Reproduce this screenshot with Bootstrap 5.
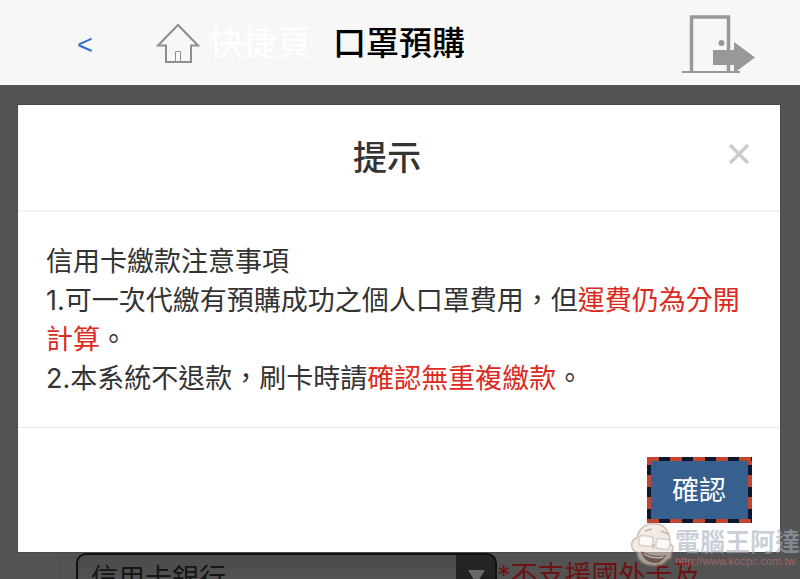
<!DOCTYPE html>
<html lang="zh-Hant">
<head>
<meta charset="utf-8">
<meta name="viewport" content="width=device-width, initial-scale=1">
<title>口罩預購</title>
<link href="https://cdn.jsdelivr.net/npm/bootstrap@5.3.0/dist/css/bootstrap.min.css" rel="stylesheet">
<style>
body { font-family: Inter, "Noto Sans CJK TC", sans-serif; font-size: 27px; line-height: 39px; color: #333; background: #535456; }
.topbar { height: 85px; background: #f7f7f7; }
.back-link { width: 156px; padding: 6px 0 0 77px; color: #2f6fd8; font-family: "Liberation Sans", sans-serif; }
.home-link { color: #fff; font-size: 34px; gap: 9px; }
.page-title { font-size: 33px; line-height: 48px; font-weight: 500; color: #000; margin-left: 22px; }
.exit-link { margin-right: 45px; }
.notice { margin: 19px 19px 0 17px; border: 1px solid #48494a; border-radius: 0; color: #333; }
.notice-head { height: 107px; border-bottom: 2px solid #f1f1f1; padding: 0 29px; }
.notice-title { font-size: 34px; line-height: 48px; font-weight: 500; }
.notice-close { line-height: 0; margin-bottom: 8px; }
.notice-body { padding: 30px 28px 29px; }
.notice-foot { border-top: 1px solid #e9e9e9; padding: 29px 28px; }
.warn { color: #dc2a20; }
.confirm {
  border: 4px solid transparent; color: #fff; padding: 10px 22px 9px 21px; line-height: 39px;
  background:
    linear-gradient(#37608f, #37608f) padding-box,
    repeating-linear-gradient(90deg, #c2452f 0 12px, #0b1830 12px 23px) top left / 100% 4px no-repeat border-box,
    repeating-linear-gradient(90deg, #c2452f 0 12px, #0b1830 12px 23px) bottom left / 100% 4px no-repeat border-box,
    repeating-linear-gradient(#c2452f 0 8px, #0b1830 8px 18px, #c2452f 18px 22px) border-box;
}
.pay-row { padding-left: 58px; background: #535456; }
.pay-panel { border-left: 1px solid #4a4e53; padding-left: 17px; background: #535353; }
.bank { width: 421px; }
.bank-select { appearance: none; width: 100%; height: 56px; border: 2px solid #111; border-radius: 10px; padding: 0 50px 6px 13px; color: #151515; background: linear-gradient(#262626, #1c1c1c) right / 39px 100% no-repeat, linear-gradient(#4b4b4b, #595959); }
.bank-mark { right: 12px; top: 17px; pointer-events: none; }
.hint { color: #6d1212; padding-top: 3px; }
.watermark { right: 0; bottom: 10px; pointer-events: none; }
.wm-name { font-size: 25px; line-height: 28px; padding-top: 4px; font-weight: 700; color: rgba(165, 175, 190, .6); }
.wm-url { font-family: "Liberation Sans", sans-serif; font-size: 11px; line-height: 11px; color: rgba(205, 110, 110, .65); }
</style>
<script src="https://cdn.jsdelivr.net/npm/bootstrap@5.3.0/dist/js/bootstrap.bundle.min.js"></script>
</head>
<body>
<div class="position-relative vh-100 overflow-hidden d-flex flex-column">
  <header class="topbar d-flex align-items-center flex-shrink-0">
    <a class="back-link text-decoration-none" href="#" aria-label="返回">&lt;</a>
    <a class="home-link d-flex align-items-center text-decoration-none" href="#">
      <svg width="44" height="42" viewBox="0 0 44 42" fill="none" stroke="#8e8e8e" aria-hidden="true"><path d="M2 23.500 22 3 42 23.500H35V40H10V23.500Z" stroke-width="2"/><path d="M19.500 40V29.500H24.500V40" stroke-width="1"/></svg>
      <span>快捷頁</span>
    </a>
    <h1 class="page-title mb-0">口罩預購</h1>
    <a class="exit-link ms-auto d-flex" href="#" aria-label="登出">
      <svg width="74" height="60" viewBox="0 0 74 60" aria-hidden="true"><path d="M10.500 59V4H47.500V59" fill="none" stroke="#989898" stroke-width="3.500"/><path d="M1 59H59" stroke="#989898" stroke-width="2"/><circle cx="40.500" cy="30" r="3" fill="#989898"/><path d="M32 37H53V29L74 44.500 53 60V52H32Z" fill="#989898"/></svg>
    </a>
  </header>
  <main>
    <section class="notice card" role="dialog" aria-labelledby="notice-title">
      <div class="notice-head d-flex align-items-center">
        <h2 id="notice-title" class="notice-title flex-grow-1 text-center mb-0">提示</h2>
        <button type="button" class="notice-close btn p-0 border-0" aria-label="關閉"><svg width="24" height="24" viewBox="0 0 24 24" stroke="#ccc" stroke-width="3.500" aria-hidden="true"><path d="M3 3 21 21M21 3 3 21"/></svg></button>
      </div>
      <div class="notice-body">
        <p class="mb-0">信用卡繳款注意事項</p>
        <p class="mb-0">1.可一次代繳有預購成功之個人口罩費用，但<span class="warn">運費仍為分開計算</span>。</p>
        <p class="mb-0">2.本系統不退款，刷卡時請<span class="warn">確認無重複繳款</span>。</p>
      </div>
      <div class="notice-foot d-flex justify-content-end">
        <button type="button" class="confirm">確認</button>
      </div>
    </section>
    <div class="pay-row">
      <div class="pay-panel d-flex">
        <div class="bank position-relative flex-shrink-0">
          <select class="bank-select" aria-label="信用卡銀行"><option>信用卡銀行</option></select>
          <svg class="bank-mark position-absolute" width="17" height="14" viewBox="0 0 17 14" aria-hidden="true"><path d="M0 0H17L8.500 14Z" fill="#686868"/></svg>
        </div>
        <span class="hint text-nowrap">*不支援國外卡及</span>
      </div>
    </div>
  </main>
  <div class="watermark position-absolute d-flex align-items-center">
    <svg width="45" height="48" viewBox="0 0 45 48" opacity=".55" aria-hidden="true"><path d="M7 17C9 6 18 1 27 3 36 4 40 13 40 22L43 26 41 37 36 40C32 46 20 46 13 42 8 39 7 35 7 31 0 30 0 18 7 17Z" fill="#eadccf" stroke="#a58f83" stroke-width="1.500"/><path d="M15 10 22 8M31 10 38 13M24 23 23 28" fill="none" stroke="#8d7870" stroke-width="1.500"/><g fill="#f7f5f3" stroke="#b6aaa4" stroke-width="1.500"><rect x="9" y="15" width="14" height="10" rx="3" transform="rotate(7 16 20)"/><rect x="26" y="18" width="14" height="10" rx="3" transform="rotate(7 33 23)"/></g><path d="M11 30Q23 37 36 34C32 42 26 43 20 41 15 39 12 35 11 30Z" fill="#86594e"/><path d="M13 32Q24 38 34 35L33 37Q23 39 14 34Z" fill="#fff"/></svg>
    <div class="text-nowrap"><div class="wm-name">電腦王阿達</div><div class="wm-url">http://www.kocpc.com.tw</div></div>
  </div>
</div>
</body>
</html>
